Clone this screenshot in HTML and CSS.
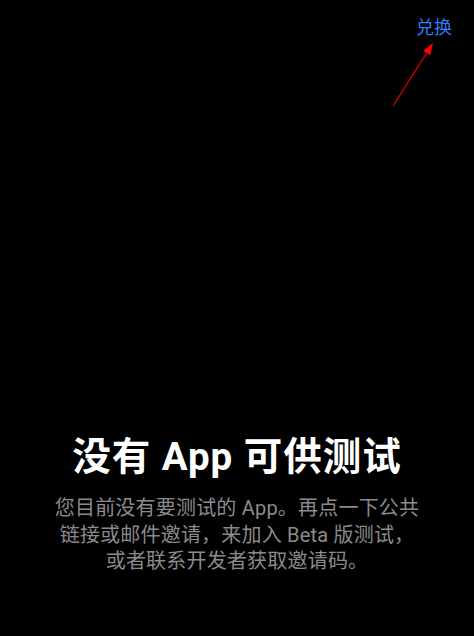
FILE: index.html
```html
<!DOCTYPE html>
<html lang="zh-CN">
<head>
<meta charset="utf-8">
<link rel="stylesheet" href="styles.css">
</head>
<body>
<div class="screen">
  <header class="topbar">
    <span class="redeem">兑换</span>
  </header>
  <svg class="arrow" width="474" height="140" viewBox="0 0 474 140">
    <line x1="393" y1="106" x2="427" y2="52.5" stroke="#e00000" stroke-width="1.3"/>
    <polygon points="433,43 430.2,55.3 423.2,50.9" fill="#ff0000"/>
  </svg>
  <main class="empty">
    <h1 class="title">没有 App 可供测试</h1>
    <p class="desc">您目前没有要测试的 App。再点一下公共<br>链接或邮件邀请，来加入 Beta 版测试，<br>或者联系开发者获取邀请码。</p>
  </main>
</div>
</body>
</html>
```
FILE: styles.css
```css
html, body {
  margin: 0;
  padding: 0;
  background: #000;
}
.screen {
  position: relative;
  width: 474px;
  height: 636px;
  display: flex;
  flex-direction: column;
  font-family: Roboto, "Noto Sans CJK SC", sans-serif;
  overflow: hidden;
}
.topbar {
  display: flex;
  justify-content: flex-end;
  padding: 16px 22px 0 0;
}
.redeem {
  color: #2f7df6;
  font-size: 18px;
  line-height: 24px;
}
.arrow {
  position: absolute;
  left: 0;
  top: 0;
}
.empty {
  display: flex;
  flex-direction: column;
  align-items: center;
  margin-top: 393px;
}
.title {
  margin: 0;
  color: #fff;
  font-size: 38.5px;
  font-weight: 700;
  line-height: 47px;
  letter-spacing: 1px;
}
.desc {
  margin: 15px 0 0;
  color: #8b8b8d;
  font-size: 20px;
  line-height: 26.5px;
  text-align: center;
  letter-spacing: 0.2px;
}
```
